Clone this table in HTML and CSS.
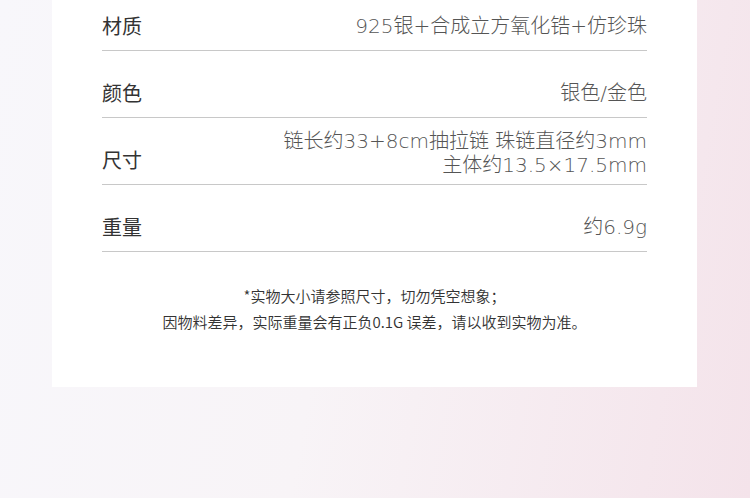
FILE: index.html
```html
<!DOCTYPE html>
<html lang="zh-CN">
<head>
    <meta charset="UTF-8">
    <meta name="viewport" content="width=device-width, initial-scale=1.0">
    <title>产品参数</title>
    <link rel="stylesheet" href="styles.css">
</head>
<body>
    <div class="card">
        <div class="spec">
            <div class="spec-row">
                <span class="label">材质</span>
                <span class="value">925银+合成立方氧化锆+仿珍珠</span>
            </div>
            <div class="spec-row">
                <span class="label">颜色</span>
                <span class="value">银色/金色</span>
            </div>
            <div class="spec-row">
                <span class="label">尺寸</span>
                <span class="value value-multi">链长约33+8cm抽拉链 珠链直径约3mm<br>主体约13.5×17.5mm</span>
            </div>
            <div class="spec-row">
                <span class="label">重量</span>
                <span class="value">约6.9g</span>
            </div>
        </div>
        <div class="note">
            <p>*实物大小请参照尺寸，切勿凭空想象；</p>
            <p>因物料差异，实际重量会有正负0.1G 误差，请以收到实物为准。</p>
        </div>
    </div>
</body>
</html>
```

FILE: styles.css
```css
body {
    margin: 0;
    padding: 0;
    height: 498px;
    overflow: hidden;
    background: linear-gradient(100deg, #f8f7fb 0%, #f8f4f7 45%, #f4e3ea 100%);
    font-family: "Noto Sans CJK SC", sans-serif;
}
.card {
    background: #fff;
    margin: -16px 53px 0 52px;
    padding: 0 50px 52px;
}
.spec-row {
    box-sizing: border-box;
    height: 67px;
    padding-top: 18px;
    border-bottom: 1px solid #c8c8c8;
    display: flex;
    align-items: center;
    justify-content: space-between;
}
.label {
    font-size: 20px;
    line-height: 24px;
    color: #333;
}
.value {
    font-family: "DejaVu Sans", "Noto Sans CJK SC", sans-serif;
    font-size: 20px;
    font-weight: 200;
    color: #555;
    text-align: right;
    line-height: 24px;
}
.value-multi {
    margin-top: -14px;
}
.note {
    padding-top: 31px;
    text-align: center;
    color: #333;
    font-size: 15px;
    font-weight: 350;
    line-height: 26px;
}
.note p {
    margin: 0;
}
```
